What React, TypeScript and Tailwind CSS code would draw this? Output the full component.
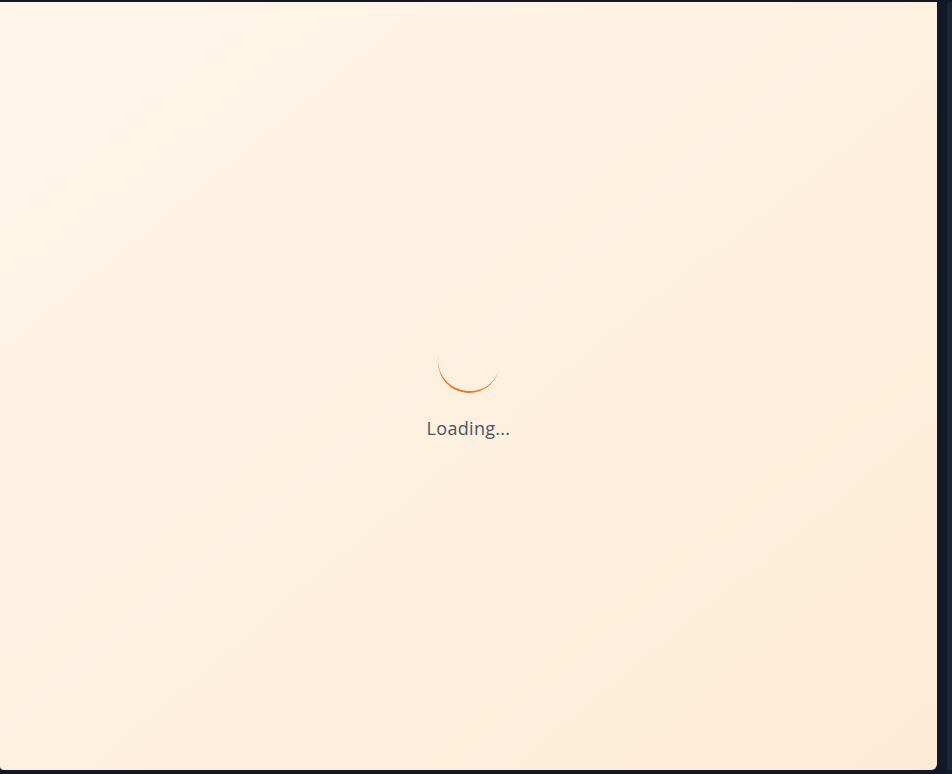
export default function App() {
  return (
    <div className="flex bg-[#111827] pt-[2px] pb-[4px] w-full h-[774px] overflow-hidden">
      {/* Main panel */}
      <main className="flex flex-col justify-center items-center bg-gradient-to-br from-[#fff6ea] to-[#feebd5] rounded-br-md rounded-bl-sm w-[937px] h-full">
        <div className="border-[#f97316] border-b-2 rounded-full w-[62px] h-[62px] rotate-[13deg]" />
        <p className="mt-[21px] font-['Open_Sans',sans-serif] text-[#475569] text-lg leading-7 tracking-[0.3px]">Loading...</p>
      </main>

      {/* Scrollbar strip */}
      <div className="flex-1" />
      <div className="bg-[#1c2333] w-[5px] h-full" />
    </div>
  );
}
